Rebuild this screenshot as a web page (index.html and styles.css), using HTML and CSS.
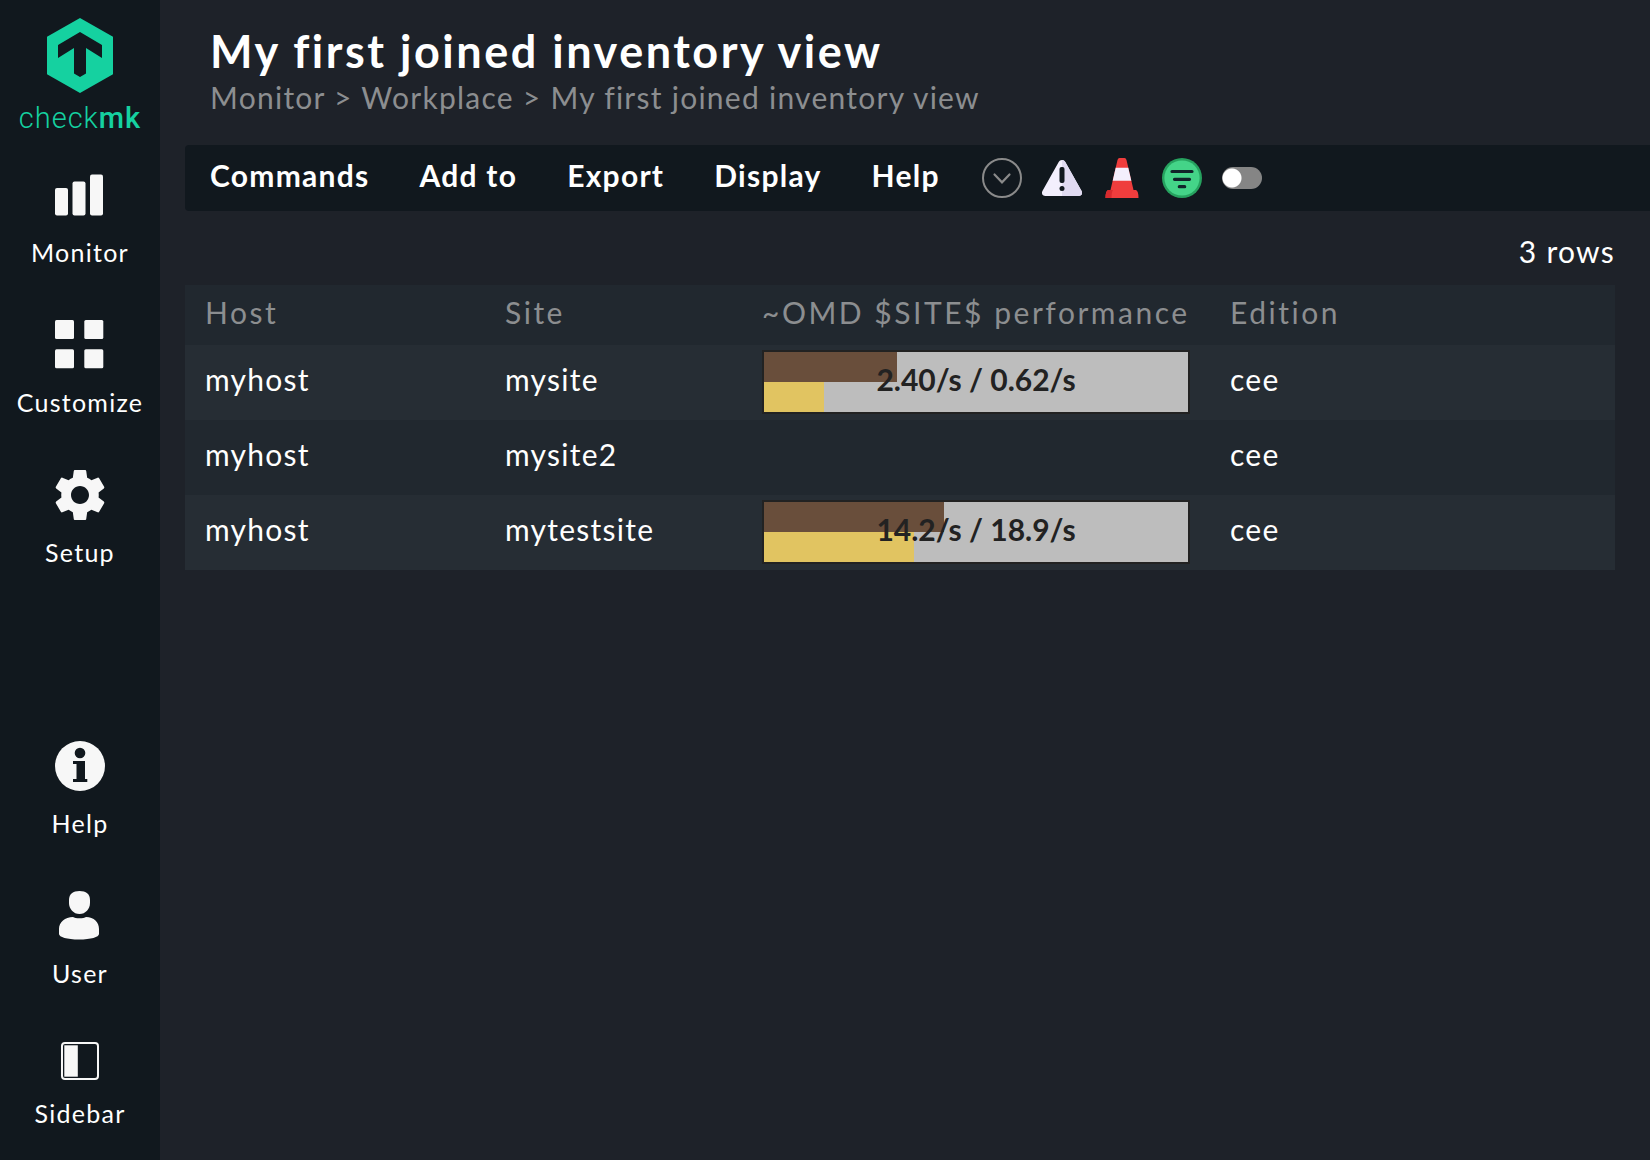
FILE: index.html
```html
<!DOCTYPE html>
<html lang="en">
<head>
<meta charset="utf-8">
<meta name="viewport" content="width=device-width, initial-scale=1">
<title>My first joined inventory view</title>
<link rel="stylesheet" href="styles.css">
</head>
<body>
<div class="app">
  <nav class="nav" aria-label="Main">
    <a class="brand" href="#">
      <svg class="brand-mark" viewBox="0 0 66 75" width="66" height="75" aria-hidden="true">
        <path fill="#15d1a0" fill-rule="evenodd" d="M33 0 66 18.700V56.300L33 75 0 56.300V18.700ZM33 14 11 27V40L27 30V55.500L33 59 39 55.500V30L55 40V27Z"/>
      </svg>
      <span class="brand-name">check<b>mk</b></span>
    </a>
    <ul class="nav-list">
      <li><a class="nav-item" href="#">
        <svg viewBox="0 0 50 50" width="50" height="50" aria-hidden="true"><g fill="#f7f7f7"><rect x="0" y="18" width="13" height="27.500" rx="2"/><rect x="17.500" y="11.500" width="13" height="34" rx="2"/><rect x="35" y="4.500" width="13" height="41" rx="2"/></g></svg>
        <span>Monitor</span></a></li>
      <li><a class="nav-item" href="#">
        <svg viewBox="0 0 50 50" width="50" height="50" aria-hidden="true"><g fill="#f7f7f7"><rect x="0" y="0" width="19" height="19" rx="1.500"/><rect x="29.300" y="0" width="19" height="19" rx="1.500"/><rect x="0" y="29.300" width="19" height="19" rx="1.500"/><rect x="29.300" y="29.300" width="19" height="19" rx="1.500"/></g></svg>
        <span>Customize</span></a></li>
      <li><a class="nav-item" href="#">
        <svg viewBox="0 0 24 24" width="60" height="60" class="gear" aria-hidden="true"><path fill="#f7f7f7" d="M19.430 12.980c.04-.32.070-.64.070-.98s-.03-.66-.07-.98l2.110-1.650c.19-.15.240-.42.120-.64l-2-3.460c-.12-.22-.39-.3-.61-.22l-2.490 1c-.52-.4-1.080-.73-1.690-.98l-.38-2.650C14.460 2.180 14.250 2 14 2h-4c-.25 0-.46.180-.49.420l-.38 2.650c-.61.250-1.170.590-1.690.980l-2.490-1c-.23-.09-.49 0-.61.220l-2 3.460c-.13.220-.07.490.120.640l2.110 1.650c-.04.320-.07.650-.07.980s.030.660.070.980l-2.110 1.650c-.19.150-.24.420-.12.640l2 3.460c.12.220.390.300.610.220l2.490-1c.52.400 1.080.730 1.690.980l.38 2.650c.03.240.240.420.490.420h4c.25 0 .46-.18.490-.42l.38-2.650c.61-.25 1.170-.59 1.690-.98l2.490 1c.23.090.490 0 .610-.22l2-3.460c.12-.22.070-.49-.12-.64l-2.110-1.650zM12 15.600c-2 0-3.600-1.600-3.600-3.600s1.600-3.600 3.600-3.600 3.600 1.600 3.600 3.600-1.600 3.600-3.600 3.600z"/></svg>
        <span>Setup</span></a></li>
    </ul>
    <ul class="nav-list nav-list-end">
      <li><a class="nav-item" href="#">
        <svg viewBox="0 0 50 50" width="50" height="50" aria-hidden="true"><circle cx="25" cy="25" r="25" fill="#f7f7f7"/><circle cx="25" cy="12" r="5.300" fill="#11181e"/><path fill="#11181e" d="M18 20H30V38H32.300V41H18V38H21.500V23H18Z"/></svg>
        <span>Help</span></a></li>
      <li><a class="nav-item" href="#">
        <svg viewBox="0 0 50 50" width="50" height="50" aria-hidden="true"><g fill="#f7f7f7"><path d="M24.500 0C31 0 35 3 35 9V12C35 18 30.500 23 24.500 23S14 18 14 12V9C14 3 18 0 24.500 0Z"/><path d="M18 26C20 27.700 29 27.700 31 26 39 26 44 31 44 38V43C44 46 36 48.500 24 48.500S4 46 4 43V38C4 31 10 26 18 26Z"/></g></svg>
        <span>User</span></a></li>
      <li><a class="nav-item" href="#">
        <svg viewBox="0 0 40 40" width="40" height="40" aria-hidden="true"><rect x="2" y="2" width="36" height="36" rx="3" fill="none" stroke="#f7f7f7" stroke-width="2"/><rect x="4.300" y="4.300" width="13.500" height="31.400" fill="#f7f7f7"/></svg>
        <span>Sidebar</span></a></li>
    </ul>
  </nav>

  <main class="main">
    <header class="page-head">
      <h1 class="page-title">My first joined inventory view</h1>
      <div class="crumbs"><a href="#">Monitor</a> &gt; <a href="#">Workplace</a> &gt; <a href="#">My first joined inventory view</a></div>
    </header>

    <div class="menubar">
      <div class="menus">
        <button type="button">Commands</button>
        <button type="button">Add to</button>
        <button type="button">Export</button>
        <button type="button">Display</button>
        <button type="button">Help</button>
      </div>
      <div class="tools">
        <button type="button" aria-label="Show more">
          <svg viewBox="0 0 40 40" width="40" height="40"><circle cx="20" cy="20" r="19" fill="none" stroke="#8a8a8a" stroke-width="2"/><path d="M12.500 16.500 20 24.300 27.500 16.500" fill="none" stroke="#8a8a8a" stroke-width="2.200" stroke-linecap="round"/></svg>
        </button>
        <button type="button" aria-label="Acknowledge problems">
          <svg viewBox="0 0 40 40" width="40" height="40"><path d="M20 2C21.500 2 22.600 2.800 23.300 4L39.300 32.500C41 35.500 39.500 38 36.500 38H3.500C.5 38-1 35.500.7 32.500L16.700 4C17.400 2.800 18.500 2 20 2Z" fill="#f3effd"/><path d="M20 2C21.500 2 22.600 2.800 23.300 4L39.300 32.500C41 35.500 39.500 38 36.500 38H20Z" fill="#e0daf1"/><rect x="17.500" y="9" width="5" height="16" rx="2" fill="#11181e"/><circle cx="20" cy="30.500" r="2.500" fill="#11181e"/></svg>
        </button>
        <button type="button" aria-label="Schedule downtimes">
          <svg viewBox="0 0 40 40" width="40" height="40"><path d="M17.500 0H22.500Q24 0 24.500 2L31.500 32H34Q36.500 33 36.500 40H3.500Q3.500 33 6 32H8.500L15.500 2Q16 0 17.500 0Z" fill="#ef3d3d"/><path d="M6 32H11Q9.500 34 9.500 40H3.500Q3.500 33 6 32Z" fill="#d82a2e"/><path d="M13.700 9.700H26.300L29.300 22.700H10.700Z" fill="#f3effd"/></svg>
        </button>
        <button type="button" aria-label="Filter">
          <svg viewBox="0 0 40 40" width="40" height="40"><circle cx="20" cy="20" r="20" fill="#26a25f"/><circle cx="20" cy="20" r="17.600" fill="#44d488"/><path d="M10 13.500H30M12.500 21.300H27.500M17.300 28.700H22.700" fill="none" stroke="#11242a" stroke-width="3.200" stroke-linecap="round"/></svg>
        </button>
        <input class="switch" type="checkbox" aria-label="Show checkboxes">
      </div>
    </div>

    <section class="content">
      <p class="row-count">3 rows</p>
      <table class="data">
        <colgroup><col class="col-host"><col class="col-site"><col class="col-perf"><col></colgroup>
        <thead>
          <tr><th>Host</th><th>Site</th><th>~OMD $SITE$ performance</th><th>Edition</th></tr>
        </thead>
        <tbody>
          <tr>
            <td>myhost</td><td>mysite</td>
            <td class="perf"><div class="meter"><i class="bar bar-a" style="width:31.400%"></i><i class="bar bar-b" style="width:14.200%"></i><span>2.40/s / 0.62/s</span></div></td>
            <td>cee</td>
          </tr>
          <tr><td>myhost</td><td>mysite2</td><td></td><td>cee</td></tr>
          <tr>
            <td>myhost</td><td>mytestsite</td>
            <td class="perf"><div class="meter"><i class="bar bar-a" style="width:42.500%"></i><i class="bar bar-b" style="width:35.400%"></i><span>14.2/s / 18.9/s</span></div></td>
            <td>cee</td>
          </tr>
        </tbody>
      </table>
    </section>
  </main>
</div>
</body>
</html>
```
FILE: styles.css
```css
* { box-sizing: border-box; }

body {
  margin: 0;
  background: #1e2229;
  color: #fff;
  font: 30px/36px Lato, sans-serif;
  letter-spacing: 0.042em;
}

a { color: inherit; text-decoration: none; }

button {
  padding: 0;
  border: 0;
  background: none;
  color: inherit;
  font: inherit;
  letter-spacing: inherit;
  cursor: pointer;
}

svg { display: block; }

.app { display: flex; min-height: 100vh; }

/* Navigation */
.nav {
  flex: none;
  display: flex;
  flex-direction: column;
  width: 160px;
  padding: 18px 0 32px;
  background: #11181e;
}

.brand {
  display: flex;
  flex-direction: column;
  align-items: center;
  gap: 7px;
  margin-bottom: 34px;
  color: #15d1a0;
}

.brand-name { font: 300 29px/36px Roboto, sans-serif; letter-spacing: 1px; }
.brand-name b { font-weight: 500; }

.nav-list {
  display: flex;
  flex-direction: column;
  gap: 53px;
  margin: 0;
  padding: 0;
  list-style: none;
}

.nav-list-end { margin-top: auto; }

.nav-item {
  display: flex;
  flex-direction: column;
  align-items: center;
  gap: 17px;
  font-size: 25px;
  line-height: 30px;
}

.gear { margin: -5px; }

/* Page head */
.main { flex: 1; min-width: 0; padding-left: 25px; }

.page-head { padding: 24px 25px 30px; }

.page-title {
  margin: 0;
  font-size: 45px;
  line-height: 55px;
  letter-spacing: 0.056em;
}

.crumbs { color: #8c8e90; }

/* Menu bar */
.menubar {
  display: flex;
  align-items: center;
  gap: 42px;
  height: 66px;
  padding-left: 25px;
  border-radius: 4px 0 0 4px;
  background: #11181e;
}

.menus { display: flex; gap: 50px; padding-bottom: 6px; font-weight: 700; }

.tools { display: flex; align-items: center; gap: 20px; }

.switch {
  appearance: none;
  width: 40px;
  height: 22px;
  margin: 0;
  border-radius: 11px;
  background: radial-gradient(circle at 10px 11px, #fff 9px, #858585 10px);
}

/* Table */
.content { padding: 22px 35px 0 0; }

.row-count { margin: 0 0 16px; text-align: right; }

.data { width: 100%; border-collapse: collapse; table-layout: fixed; }
.col-host { width: 300px; }
.col-site { width: 257px; }
.col-perf { width: 468px; }

.data th {
  padding: 9px 20px 15px;
  background: #21282f;
  color: #8c8e90;
  font-weight: 400;
  letter-spacing: 0.084em;
  text-align: left;
  white-space: nowrap;
}

.data td { padding: 16px 20px 23px; background: #262d34; }
.data tbody tr:nth-child(even) td { background: #21282f; }
.data .perf { padding: 5px 20px 6px; }

.meter {
  display: grid;
  grid-template-rows: 30px 30px;
  border: 2px solid #222;
  background: #bdbdbd;
  color: #222;
  font-weight: 700;
  letter-spacing: 0;
}

.bar { grid-column: 1; }
.bar-a { grid-row: 1; background: #694e3b; }
.bar-b { grid-row: 2; background: #e1c461; }

.meter span { grid-area: 1 / 1 / 3 / 2; padding-top: 9px; text-align: center; }
```
